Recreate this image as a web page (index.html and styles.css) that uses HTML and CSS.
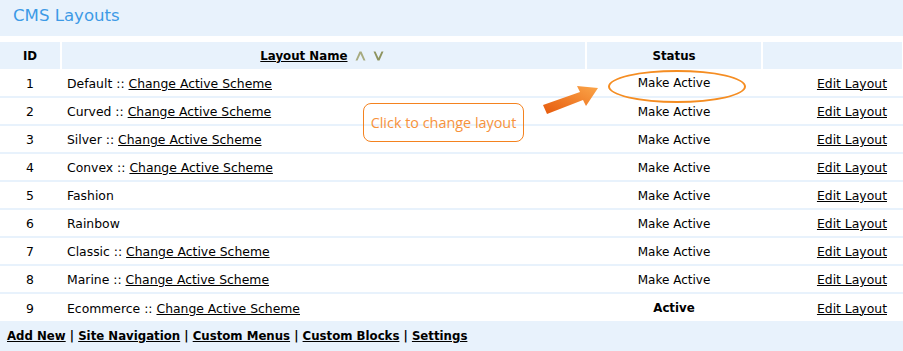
FILE: index.html
```html
<!DOCTYPE html>
<html lang="en">
<head>
    <meta charset="UTF-8">
    <title>CMS Layouts</title>
    <link rel="stylesheet" href="styles.css">
</head>
<body>
    <div class="page">
        <h1 class="title">CMS Layouts</h1>
        <table class="layouts">
            <colgroup>
                <col style="width: 61px">
                <col>
                <col style="width: 176px">
                <col style="width: 140px">
            </colgroup>
            <thead>
                <tr>
                    <th>ID</th>
                    <th>
                        <a href="#">Layout Name</a>
                        <span class="sort">
                            <svg width="11" height="10" viewBox="0 0 11 10"><path d="M0.5 9.5 L4.5 0.5 L6.5 0.5 L10.5 9.5 L8.5 9.5 L5.5 3 L2.5 9.5 Z" fill="#a7ab80"/></svg>
                            <svg width="11" height="10" viewBox="0 0 11 10"><path d="M0.5 0.5 L4.5 9.5 L6.5 9.5 L10.5 0.5 L8.5 0.5 L5.5 7 L2.5 0.5 Z" fill="#8d935e"/></svg>
                        </span>
                    </th>
                    <th>Status</th>
                    <th></th>
                </tr>
            </thead>
            <tbody>
                <tr><td class="col-id">1</td><td>Default :: <a href="#">Change Active Scheme</a></td><td class="col-status">Make Active</td><td class="col-edit"><a href="#">Edit Layout</a></td></tr>
                <tr><td class="col-id">2</td><td>Curved :: <a href="#">Change Active Scheme</a></td><td class="col-status">Make Active</td><td class="col-edit"><a href="#">Edit Layout</a></td></tr>
                <tr><td class="col-id">3</td><td>Silver :: <a href="#">Change Active Scheme</a></td><td class="col-status">Make Active</td><td class="col-edit"><a href="#">Edit Layout</a></td></tr>
                <tr><td class="col-id">4</td><td>Convex :: <a href="#">Change Active Scheme</a></td><td class="col-status">Make Active</td><td class="col-edit"><a href="#">Edit Layout</a></td></tr>
                <tr><td class="col-id">5</td><td>Fashion</td><td class="col-status">Make Active</td><td class="col-edit"><a href="#">Edit Layout</a></td></tr>
                <tr><td class="col-id">6</td><td>Rainbow</td><td class="col-status">Make Active</td><td class="col-edit"><a href="#">Edit Layout</a></td></tr>
                <tr><td class="col-id">7</td><td>Classic :: <a href="#">Change Active Scheme</a></td><td class="col-status">Make Active</td><td class="col-edit"><a href="#">Edit Layout</a></td></tr>
                <tr><td class="col-id">8</td><td>Marine :: <a href="#">Change Active Scheme</a></td><td class="col-status">Make Active</td><td class="col-edit"><a href="#">Edit Layout</a></td></tr>
                <tr><td class="col-id">9</td><td>Ecommerce :: <a href="#">Change Active Scheme</a></td><td class="col-status active">Active</td><td class="col-edit"><a href="#">Edit Layout</a></td></tr>
            </tbody>
        </table>
        <div class="footer">
            <a href="#">Add New</a> | <a href="#">Site Navigation</a> | <a href="#">Custom Menus</a> | <a href="#">Custom Blocks</a> | <a href="#">Settings</a>
        </div>

        <!-- callout over the table -->
        <div class="hint">Click to change layout</div>
        <svg class="hint-arrow" width="60" height="34" viewBox="0 0 60 34">
            <defs>
                <linearGradient id="arrowGrad" x1="0" y1="1" x2="1" y2="0">
                    <stop offset="0" stop-color="#e65a0c"/>
                    <stop offset="1" stop-color="#fba64a"/>
                </linearGradient>
            </defs>
            <path d="M1 21 L38 8 L35 2 L56 4 L44 22 L41 16 L5 30 Z" fill="url(#arrowGrad)"/>
        </svg>
        <div class="hint-ring"></div>
    </div>
</body>
</html>
```

FILE: styles.css
```css
:root {
    --panel: #e8f2fc;
    --title: #3d9ae6;
    --orange: #f4821f;
    --text: #000;
}
body {
    margin: 0;
    font-family: "DejaVu Sans", Verdana, sans-serif;
    font-size: 12.4px;
    color: var(--text);
    background: #fff;
}
a {
    color: #000;
    text-decoration: underline;
}
.page {
    position: relative;
    width: 903px;
    height: 351px;
    overflow: hidden;
}
.title {
    margin: 0;
    height: 36px;
    padding-left: 13px;
    line-height: 32px;
    background: var(--panel);
    color: var(--title);
    font-size: 16.6px;
    font-weight: normal;
}
.layouts {
    margin-top: 6px;
    width: 100%;
    table-layout: fixed;
    border-collapse: collapse;
}
.layouts th {
    height: 27px;
    padding: 0;
    background: var(--panel);
    border-right: 2px solid #fff;
    font-size: 11.8px;
    font-weight: bold;
    text-align: center;
}
.layouts th:last-child {
    border-right: none;
}
.layouts td {
    height: 28px;
    padding: 1px 0 0 5px;
    box-sizing: border-box;
    border-bottom: 2px solid var(--panel);
    border-right: 2px solid #fff;
}
.layouts tbody tr:last-child td {
    border-bottom: none;
}
.layouts td.col-id {
    padding-left: 0;
    text-align: center;
}
.layouts td.col-status {
    padding-left: 0;
    font-size: 12px;
    text-align: center;
}
.layouts td.active {
    font-size: 11.8px;
    font-weight: bold;
}
.layouts td.col-edit {
    padding-left: 0;
    padding-right: 14px;
    text-align: right;
}
.sort {
    margin-left: 3px;
}
.sort svg {
    vertical-align: -1px;
    margin-right: 3px;
}
.footer {
    height: 30px;
    line-height: 31px;
    padding-left: 7px;
    background: var(--panel);
    font-size: 11.75px;
    font-weight: bold;
}
.hint {
    position: absolute;
    left: 363px;
    top: 103px;
    width: 159px;
    height: 37px;
    border: 1px solid var(--orange);
    border-radius: 8px;
    color: #f7923c;
    font-family: "Open Sans", sans-serif;
    font-size: 14.4px;
    line-height: 37px;
    text-align: center;
}
.hint-arrow {
    position: absolute;
    left: 542px;
    top: 84px;
}
.hint-ring {
    position: absolute;
    left: 608px;
    top: 70px;
    width: 134px;
    height: 29px;
    border: 2px solid #f58d22;
    border-radius: 50%;
}
```
